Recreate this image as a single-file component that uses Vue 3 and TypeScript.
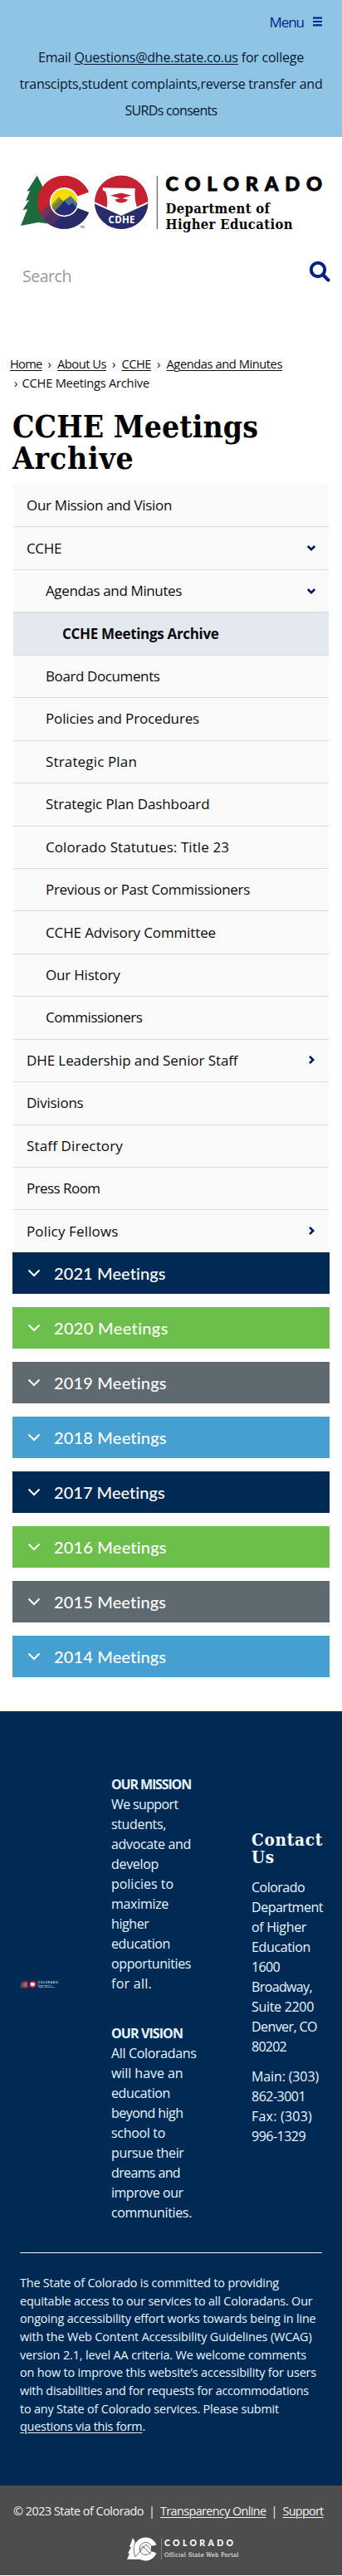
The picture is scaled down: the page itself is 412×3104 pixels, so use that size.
<script setup lang="ts">
import type { Directive } from 'vue'

interface Line { text: string; w: number }
interface NavItem extends Line { level: number; arrow?: 'down' | 'right'; active?: boolean }
interface Panel extends Line { tone: string }

// Tracks a single line of text so that it spans the given width in pixels.
const vFit: Directive<HTMLElement, number> = {
  mounted(el, binding) {
    const natural = el.getBoundingClientRect().width
    const count = (el.textContent ?? '').length
    if (count > 0) el.style.letterSpacing = `${(binding.value - natural) / count}px`
  },
}

const nav: NavItem[] = [
  { text: 'Our Mission and Vision', w: 175, level: 1 },
  { text: 'CCHE', w: 42, level: 1, arrow: 'down' },
  { text: 'Agendas and Minutes', w: 164, level: 2, arrow: 'down' },
  { text: 'CCHE Meetings Archive', w: 188.5, level: 3, active: true },
  { text: 'Board Documents', w: 137.5, level: 2 },
  { text: 'Policies and Procedures', w: 185, level: 2 },
  { text: 'Strategic Plan', w: 110, level: 2 },
  { text: 'Strategic Plan Dashboard', w: 197.5, level: 2 },
  { text: 'Colorado Statutues: Title 23', w: 221, level: 2 },
  { text: 'Previous or Past Commissioners', w: 246, level: 2 },
  { text: 'CCHE Advisory Committee', w: 205, level: 2 },
  { text: 'Our History', w: 89.5, level: 2 },
  { text: 'Commissioners', w: 116.5, level: 2 },
  { text: 'DHE Leadership and Senior Staff', w: 254.5, level: 1, arrow: 'right' },
  { text: 'Divisions', w: 68.5, level: 1 },
  { text: 'Staff Directory', w: 116, level: 1 },
  { text: 'Press Room', w: 88.5, level: 1 },
  { text: 'Policy Fellows', w: 110.5, level: 1, arrow: 'right' },
]

const panels: Panel[] = [
  { text: '2021 Meetings', w: 135, tone: 'navy' },
  { text: '2020 Meetings', w: 138, tone: 'green' },
  { text: '2019 Meetings', w: 136, tone: 'slate' },
  { text: '2018 Meetings', w: 136, tone: 'blue' },
  { text: '2017 Meetings', w: 134, tone: 'navy' },
  { text: '2016 Meetings', w: 136, tone: 'green' },
  { text: '2015 Meetings', w: 135.5, tone: 'slate' },
  { text: '2014 Meetings', w: 135.5, tone: 'blue' },
]

const mission: Line[] = [
  { text: 'We support', w: 80.5 },
  { text: 'students,', w: 66 },
  { text: 'advocate and', w: 96 },
  { text: 'develop', w: 57 },
  { text: 'policies to', w: 75 },
  { text: 'maximize', w: 69 },
  { text: 'higher', w: 45.5 },
  { text: 'education', w: 71 },
  { text: 'opportunities', w: 96 },
  { text: 'for all.', w: 49 },
]

const vision: Line[] = [
  { text: 'All Coloradans', w: 102.5 },
  { text: 'will have an', w: 86.5 },
  { text: 'education', w: 71 },
  { text: 'beyond high', w: 86.5 },
  { text: 'school to', w: 65 },
  { text: 'pursue their', w: 87.5 },
  { text: 'dreams and', w: 83 },
  { text: 'improve our', w: 86.5 },
  { text: 'communities.', w: 97 },
]

const address: Line[] = [
  { text: 'Colorado', w: 64 },
  { text: 'Department', w: 86 },
  { text: 'of Higher', w: 66 },
  { text: 'Education', w: 71 },
  { text: '1600', w: 34 },
  { text: 'Broadway,', w: 73 },
  { text: 'Suite 2200', w: 75 },
  { text: 'Denver, CO', w: 79 },
  { text: '80202', w: 42 },
]

const phones: Line[] = [
  { text: 'Main: (303)', w: 81 },
  { text: '862-3001', w: 65 },
  { text: 'Fax: (303)', w: 73 },
  { text: '996-1329', w: 65 },
]

const statement: Line[] = [
  { text: 'The State of Colorado is committed to providing', w: 312 },
  { text: 'equitable access to our services to all Coloradans. Our', w: 352.5 },
  { text: 'ongoing accessibility effort works towards being in line', w: 356.5 },
  { text: 'with the Web Content Accessibility Guidelines (WCAG)', w: 351.5 },
  { text: 'version 2.1, level AA criteria. We welcome comments', w: 345 },
  { text: 'on how to improve this website’s accessibility for users', w: 357 },
  { text: 'with disabilities and for requests for accommodations', w: 348 },
  { text: 'to any State of Colorado services. Please submit', w: 312 },
]
</script>

<template>
  <div class="page">
    <header class="top">
      <div class="menu">
        <span v-fit="41.5">Menu</span>
        <svg class="bars" width="13" height="12" viewBox="0 0 13 12"><path d="M1 1.6h11M1 6h11M1 10.4h11" /></svg>
      </div>
      <p class="notice"><span v-fit="320">Email <a>Questions@dhe.state.co.us</a> for college</span></p>
      <p class="notice"><span v-fit="365">transcipts,student complaints,reverse transfer and</span></p>
      <p class="notice"><span v-fit="111">SURDs consents</span></p>
    </header>

    <section class="brand">
      <svg class="logo" viewBox="0 0 366 70">
        <defs>
          <clipPath id="seal"><circle cx="122.2" cy="33.8" r="32.2" /></clipPath>
          <clipPath id="ring"><circle cx="53.5" cy="33.6" r="15.8" /></clipPath>
          <clipPath id="bigc"><path d="M83 21.5A32.1 32.1 0 1 0 83 46L70 41H68V27Z" /></clipPath>
        </defs>
        <path fill="#1d6b3c" d="M20.7 1.5 30 20 48 64 38 60 22 58 1 62 9 42 3.5 43 11 31 7 32 12 20 8.5 20.5Z" />
        <g clip-path="url(#bigc)">
          <rect x="20" width="70" height="70" fill="#c8202f" />
          <path fill="#262c6b" d="M34 60 54 40H90V70H20Z" />
          <path fill="#77325b" d="M23 48 37 34 46 44 29 62Z" />
          <path fill="#4b3167" d="M29 53 44 38 53 48 36 64Z" />
        </g>
        <circle cx="53.5" cy="33.6" r="17.6" fill="#fff" />
        <g clip-path="url(#ring)">
          <rect x="36" y="16" width="36" height="36" fill="#fbdc08" />
          <path fill="#9a9527" d="M36 39 47 27 57 38 40 50Z" />
          <path fill="#49768a" d="M43 39 61 26 72 38V50H42Z" />
          <path fill="#6e7d45" d="M38 41 49 30 55 36 45 46Z" />
          <path fill="#262c7b" d="M37 50 53.5 32 59 38 63 34 71 43V53H37Z" />
        </g>
        <text x="72" y="64.5" font-size="4" class="sans" fill="#222">TM</text>
        <g clip-path="url(#seal)">
          <rect x="89" width="67" height="70" fill="#c52233" />
          <path fill="#262c6d" d="M89 34 122 49 156 34V70H89Z" />
          <path fill="none" stroke="#fff" stroke-width="2" d="M88 33.5 122 49 156 33.5" />
        </g>
        <path fill="#fff" d="M99.5 17Q99.5 15.5 101.5 16.2L139 17Q137 27 141 40L122 49 104.5 41Q106.5 30 103 20.5Q100 21 99.5 17Z" />
        <path fill="#c52233" d="M109 25.5 122 22.5 134 25.5 122 29.5Z" />
        <path fill="#c52233" d="M114.5 30.5Q122 27.5 130 30.5Q128 34 122 34.5Q116 34 114.5 30.5Z" />
        <text x="106.5" y="58.5" textLength="32" class="sans seal-text">CDHE</text>
        <path d="M165.3 2V66" stroke="#444" stroke-width="1" />
        <text x="175.5" y="19.6" textLength="188.5" class="wordmark heavy">COLORADO</text>
        <text x="175.5" y="46.8" textLength="125.5" class="slab">Department of</text>
        <text x="175.5" y="65.8" textLength="153" class="slab">Higher Education</text>
      </svg>
      <div class="search">
        <span v-fit="59">Search</span>
        <svg width="26" height="26" viewBox="0 0 26 26"><circle cx="11" cy="11" r="8.2" /><path d="M17 17 23.5 23.5" /></svg>
      </div>
    </section>

    <nav class="crumbs">
      <div class="crumb-row">
        <a v-fit="38.5">Home</a><i>›</i><a v-fit="59">About Us</a><i>›</i><a v-fit="35.5">CCHE</a><i>›</i><a v-fit="139.5">Agendas and Minutes</a>
      </div>
      <div class="crumb-row second"><i>›</i><span v-fit="153.5">CCHE Meetings Archive</span></div>
    </nav>

    <h1>
      <span v-fit="296">CCHE Meetings</span><br />
      <span v-fit="146.5">Archive</span>
    </h1>

    <ul class="side">
      <li v-for="item in nav" :key="item.text" :class="['level-' + item.level, { active: item.active }]">
        <span v-fit="item.w">{{ item.text }}</span>
        <svg v-if="item.arrow" :class="['arrow', item.arrow]" width="12" height="12" viewBox="0 0 12 12"><path d="M1.8 4 6 8.2 10.2 4" /></svg>
      </li>
    </ul>

    <div class="panels">
      <div v-for="panel in panels" :key="panel.text" :class="['panel', panel.tone]">
        <svg width="16" height="10" viewBox="0 0 16 10"><path d="M1.5 1.5 8 8 14.5 1.5" /></svg>
        <span v-fit="panel.w">{{ panel.text }}</span>
      </div>
    </div>

    <footer class="foot">
      <div class="columns">
        <svg class="logo-mini" viewBox="0 0 366 70">
          <path fill="#1d6b3c" d="M20.7 1.5 48 64 1 62Z" />
          <path fill="#d12b42" d="M83 21.5A32 32 0 1 0 83 46L70 41H68V27Z" />
          <circle cx="53.5" cy="33.6" r="16" fill="#718194" />
          <circle cx="122.2" cy="33.8" r="32" fill="#d12b42" />
          <path fill="#fff" d="M102 17H139L141 40 122 49 104 41Z" />
          <path d="M165.3 2V66" stroke="#8797ad" stroke-width="2" />
          <text x="175" y="19.8" textLength="189" class="wordmark light">COLORADO</text>
          <text x="175.5" y="46.8" textLength="125.5" class="slab light">Department of</text>
          <text x="175.5" y="65.8" textLength="153" class="slab light">Higher Education</text>
        </svg>
        <div class="goals">
          <div class="block">
            <b v-fit="96">OUR MISSION</b>
            <span v-for="line in mission" :key="line.text" v-fit="line.w">{{ line.text }}</span>
          </div>
          <div class="block">
            <b v-fit="86">OUR VISION</b>
            <span v-for="line in vision" :key="line.text" v-fit="line.w">{{ line.text }}</span>
          </div>
        </div>
        <div class="contact">
          <h2><span v-fit="86">Contact</span><br /><span v-fit="28">Us</span></h2>
          <div class="block">
            <span v-for="line in address" :key="line.text" v-fit="line.w">{{ line.text }}</span>
          </div>
          <div class="block">
            <span v-for="line in phones" :key="line.text" v-fit="line.w">{{ line.text }}</span>
          </div>
        </div>
      </div>
      <div class="statement">
        <span v-for="line in statement" :key="line.text" v-fit="line.w">{{ line.text }}</span>
        <span v-fit="151"><a>questions via this form</a>.</span>
      </div>
    </footer>

    <div class="legal">
      <div class="links">
        <span v-fit="157">© 2023 State of Colorado</span><i>|</i><a v-fit="127.5">Transparency Online</a><i>|</i><a v-fit="49">Support</a>
      </div>
      <svg class="portal" width="137" height="30" viewBox="0 0 137 30">
        <path fill="#fff" d="M8 2 12 9 17 28H1L4 21 2 21 6 13 4 13Z" />
        <path fill="#fff" d="M36.5 10.5A14 14 0 1 0 36.5 20.5L30 18V12Z" />
        <g fill="none" stroke="#4d4d4d" stroke-width="0.8">
          <path d="M14 3Q6 11 11 25" />
          <circle cx="23.5" cy="15" r="7.5" />
          <path d="M11 25 24 10 31 18M16 17 20 12 30 22" />
        </g>
        <path d="M42.5 2V28" stroke="#999" stroke-width="0.7" />
        <text x="46" y="12.3" textLength="83" class="wordmark portal-mark">COLORADO</text>
        <text x="46" y="25.3" textLength="89.5" class="slab portal-sub">Official State Web Portal</text>
      </svg>
    </div>
  </div>
</template>

<style>
body { background: #fff; }
</style>

<style scoped>
.page { width: 412px; height: 3103px; font-family: "Open Sans", "Noto Sans", sans-serif; color: #0b0b0f; background: #fff; display: flex; flex-direction: column; }
.page span, .page b, .page a { white-space: nowrap; }
p, ul, h1, h2 { margin: 0; padding: 0; }
a { text-decoration: underline; text-underline-offset: 2px; text-decoration-thickness: 1px; }
i { font-style: normal; }

.top { height: 165px; background: #8fc4e5; color: #07192f; }
.menu { display: flex; align-items: center; gap: 10px; height: 32px; padding: 10px 23px 11px 0; justify-content: flex-end; font-size: 17px; color: #00268a; }
.bars { fill: none; stroke: #00268a; stroke-width: 2.1; }
.notice { height: 32px; line-height: 32px; font-size: 16px; text-align: center; }
.notice span, .menu span { display: inline-block; }

.brand { height: 262px; padding-top: 45px; box-sizing: border-box; }
.logo { display: block; width: 366px; height: 70px; margin-left: 24px; }
.sans { font-family: "Open Sans", sans-serif; }
.seal-text { font-size: 11.5px; font-weight: 700; fill: #fff; }
.wordmark { font-family: Lato, sans-serif; font-weight: 900; font-size: 24.5px; fill: #050505; }
.heavy { font-size: 23.5px; stroke: #050505; stroke-width: 0.9; }
.slab { font-family: "DejaVu Serif Condensed", "DejaVu Serif", serif; font-stretch: condensed; font-weight: 700; font-size: 16.5px; fill: #050505; }
.light { fill: #dce5ef; }
.search { display: flex; align-items: flex-start; justify-content: space-between; padding: 33px 14.5px 0 27px; font-size: 19.5px; color: #999; }
.search span { line-height: 39px; }
.search svg { margin-top: 1px; fill: none; stroke: #00247d; stroke-width: 4; stroke-linecap: round; }

.crumbs { height: 68px; padding-left: 12px; font-size: 14.7px; line-height: 23px; color: #111; }
.crumb-row { display: flex; }
.crumb-row i { width: 18.5px; text-align: center; }
.crumb-row.second i { width: 14.5px; padding-left: 0; }

h1 { height: 89px; padding-left: 15px; font-family: "DejaVu Serif Condensed", "DejaVu Serif", serif; font-stretch: condensed; font-weight: 700; font-size: 37px; line-height: 38px; color: #020202; }

.side { list-style: none; height: 925px; margin: 0 16px; display: flex; flex-direction: column; }
.side li { flex: 1; display: flex; align-items: center; justify-content: space-between; box-sizing: border-box; padding: 0 15px 1px 16px; background: #fafafa; border-bottom: 1px solid #dcdcdc; font-size: 17px; }
.side li:last-child { border-bottom: 0; }
.side .level-2 { padding-left: 39px; }
.side .level-3 { padding-left: 59px; }
.side .active { background: #e4e8ef; font-weight: 700; }
.arrow { fill: none; stroke: #00165e; stroke-width: 2.6; }
.arrow.right { transform: rotate(-90deg); }

.panels { display: flex; flex-direction: column; gap: 16px; margin: 0 15px 41px; }
.panel { height: 50px; display: flex; align-items: center; gap: 16px; padding-left: 18px; color: #fff; font-family: Lato, sans-serif; font-size: 20px; font-weight: 500; }
.panel svg { fill: none; stroke: #fff; stroke-width: 2; }
.navy { background: #002a54; }
.green { background: #6cbf4a; }
.slate { background: #5e6970; }
.blue { background: #459fd0; }

.foot { height: 933px; background: #002a54; color: #e8f4ff; display: flex; flex-direction: column; }
.columns { height: 653px; margin: 0 24px; border-bottom: 1px solid #eef6ff; display: flex; align-items: flex-start; box-sizing: border-box; }
.logo-mini { flex: none; width: 46px; height: 9px; margin-top: 325px; }
.goals { flex: none; width: 233px; padding-left: 64px; margin-top: 76px; box-sizing: border-box; }
.contact { flex: none; width: 86px; margin-top: 145px; }
.block { display: flex; flex-direction: column; align-items: flex-start; font-size: 16px; line-height: 24px; }
.goals .block + .block { margin-top: 36px; }
.contact .block + .block { margin-top: 12px; }
h2 { font-family: "DejaVu Serif Condensed", "DejaVu Serif", serif; font-stretch: condensed; font-size: 20.5px; line-height: 21px; font-weight: 700; margin-bottom: 13px; color: #f4f9ff; }
.statement { display: flex; flex-direction: column; align-items: flex-start; padding: 25px 24px 0; font-size: 14.4px; line-height: 21.65px; }

.legal { flex: 1; background: #4d4d4d; color: #f2f2f2; display: flex; flex-direction: column; align-items: flex-start; }
.links { display: flex; padding: 20px 0 0 16px; font-size: 14.4px; line-height: 22px; }
.links i { width: 20px; text-align: center; }
.portal { margin: 19px 0 0 152px; }
.portal-mark { font-size: 10.5px; fill: #fff; }
.portal-sub { font-size: 7.4px; fill: #fff; font-weight: 400; }
</style>
